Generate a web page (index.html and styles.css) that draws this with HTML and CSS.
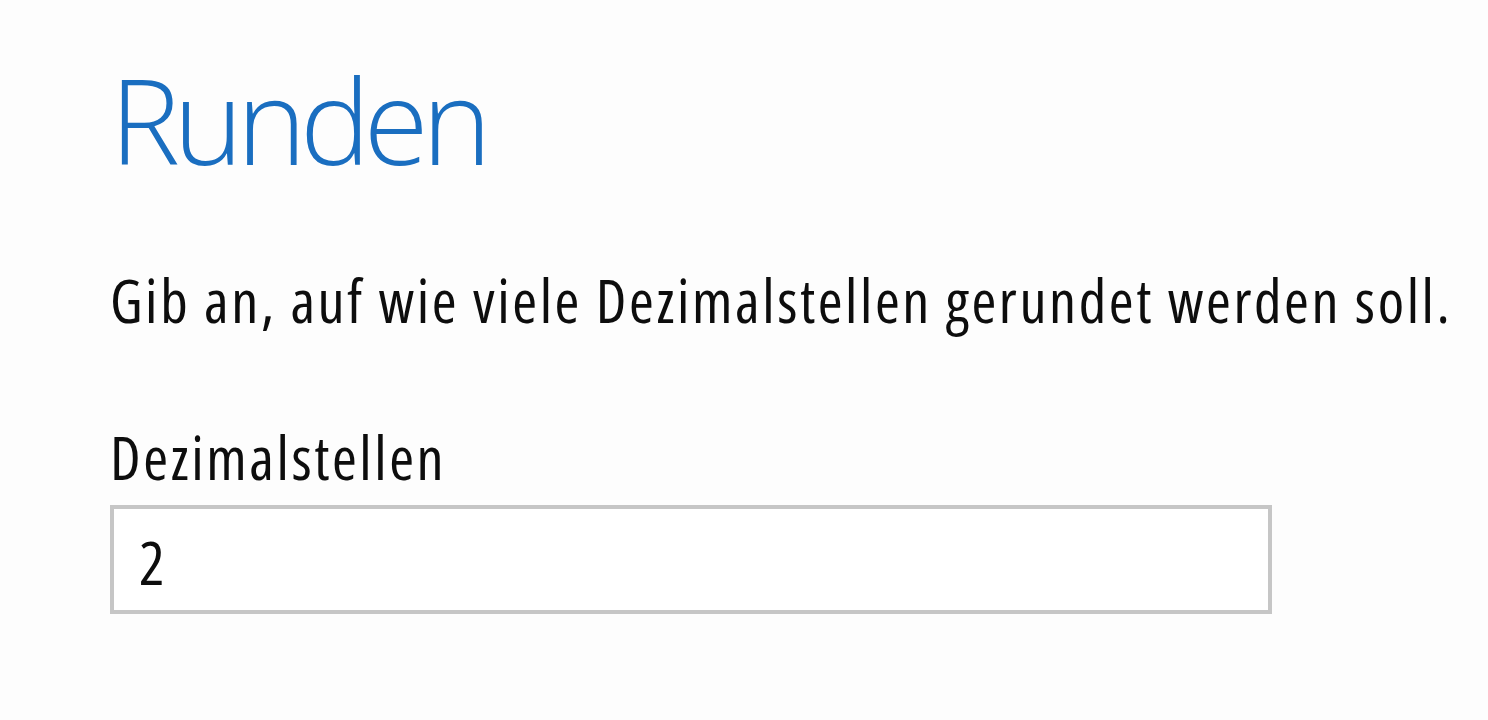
FILE: index.html
```html
<!DOCTYPE html>
<html lang="de">
<head>
<meta charset="utf-8">
<title>Runden</title>
<link rel="stylesheet" href="styles.css">
</head>
<body>
<main class="dialog">
  <h1 class="title">Runden</h1>
  <p class="desc">Gib an, auf wie viele Dezimalstellen gerundet werden soll.</p>
  <label class="field">
    <span class="label">Dezimalstellen</span>
    <span class="input">2</span>
  </label>
</main>
</body>
</html>
```
FILE: styles.css
```css
html, body {
  margin: 0;
  padding: 0;
  background: #fdfdfd;
}
.dialog {
  width: 1488px;
  height: 720px;
  box-sizing: border-box;
  padding: 61px 0 0 110px;
  font-family: "Open Sans", "Noto Sans", sans-serif;
  font-stretch: 87.5%;
  color: #0d0d0d;
}
.title {
  margin: 0;
  font-size: 118px;
  font-stretch: 100%;
  font-weight: 300;
  line-height: 1;
  letter-spacing: -6.5px;
  color: #1a6ec0;
  white-space: nowrap;
}
.desc {
  margin: 91px 0 0 0;
  font-size: 60px;
  line-height: 1;
  letter-spacing: 2.6px;
  white-space: nowrap;
}
.field {
  display: flex;
  flex-direction: column;
  margin-top: 97px;
}
.label {
  font-size: 60px;
  line-height: 1;
  letter-spacing: 2.6px;
}
.input {
  margin-top: 18px;
  width: 1162px;
  height: 109px;
  box-sizing: border-box;
  border: 4px solid #c6c6c6;
  background: #fff;
  padding: 23px 0 0 25px;
  font-size: 60px;
  line-height: 1;
}
```
